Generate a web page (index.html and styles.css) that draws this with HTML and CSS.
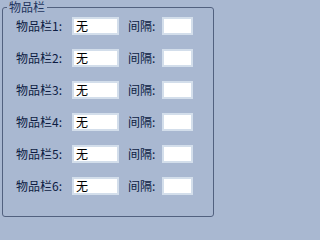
FILE: index.html
```html
<!DOCTYPE html>
<html>
<head>
<meta charset="utf-8">
<link rel="stylesheet" href="styles.css">
</head>
<body>
<fieldset class="group">
  <legend class="group-title">物品栏</legend>
  <div class="rows">
    <div class="row"><span class="lbl">物品栏1:</span><span class="field field-wide">无</span><span class="lbl lbl-gap">间隔:</span><span class="field field-narrow"></span></div>
    <div class="row"><span class="lbl">物品栏2:</span><span class="field field-wide">无</span><span class="lbl lbl-gap">间隔:</span><span class="field field-narrow"></span></div>
    <div class="row"><span class="lbl">物品栏3:</span><span class="field field-wide">无</span><span class="lbl lbl-gap">间隔:</span><span class="field field-narrow"></span></div>
    <div class="row"><span class="lbl">物品栏4:</span><span class="field field-wide">无</span><span class="lbl lbl-gap">间隔:</span><span class="field field-narrow"></span></div>
    <div class="row"><span class="lbl">物品栏5:</span><span class="field field-wide">无</span><span class="lbl lbl-gap">间隔:</span><span class="field field-narrow"></span></div>
    <div class="row"><span class="lbl">物品栏6:</span><span class="field field-wide">无</span><span class="lbl lbl-gap">间隔:</span><span class="field field-narrow"></span></div>
  </div>
</fieldset>
</body>
</html>
```
FILE: styles.css
```css
html, body {
  margin: 0;
  padding: 0;
  background: #a9b8d1;
  font-family: "Noto Sans CJK SC", "Noto Sans", sans-serif;
  font-size: 12px;
}
.group {
  box-sizing: border-box;
  margin: 1px 0 0 2px;
  width: 212px;
  height: 216px;
  padding: 4px 0 0 0;
  border: 1px solid #52617f;
  border-radius: 3px;
  min-inline-size: 0;
}
.group-title {
  margin-left: 4px;
  padding: 0 2px;
  font-size: 12px;
  line-height: 12px;
  color: #22345e;
}
.rows {
  display: flex;
  flex-direction: column;
  gap: 14px;
  padding-left: 13px;
}
.row {
  display: grid;
  grid-template-columns: 56px 47px 43px 31px;
  align-items: center;
  height: 18px;
}
.lbl {
  color: #0c1b42;
  line-height: 18px;
  white-space: nowrap;
}
.lbl-gap {
  padding-left: 9px;
}
.field {
  box-sizing: border-box;
  height: 18px;
  background: #ffffff;
  border: 2px solid #d3deeb;
  color: #000000;
  line-height: 14px;
  padding-left: 2px;
}
```
